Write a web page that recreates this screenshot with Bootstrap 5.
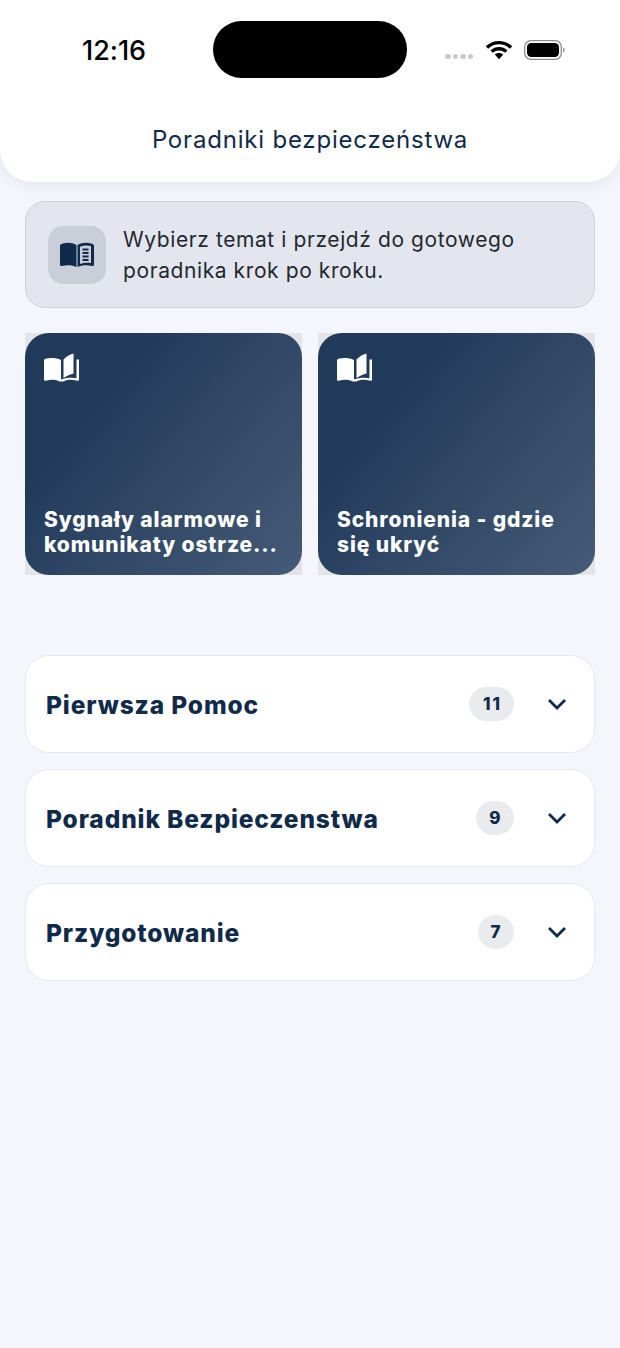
<!DOCTYPE html>
<html lang="pl">
<head>
<meta charset="utf-8">
<title>Poradniki bezpieczeństwa</title>
<link href="https://cdn.jsdelivr.net/npm/bootstrap@5.3.0/dist/css/bootstrap.min.css" rel="stylesheet">
<style>
html,body{height:100%}
body{background:#f4f6fb;font-family:Inter,"Liberation Sans",sans-serif;color:#0f2a4a;overflow:hidden}
.app-top{height:182px;background:#fff;border-radius:0 0 32px 32px;box-shadow:0 4px 14px rgba(15,42,74,.07);padding:21px 0 0}
.status-row{height:57px;padding:0 54px 0 82px}
.clock{width:131px;font-size:27px;font-weight:500;line-height:1;color:#000;letter-spacing:-.05px;padding-top:1px}
.island{width:194px;height:57px;background:#000;border-radius:29px}
.sig-wrap{margin-left:38px;gap:2px;margin-top:14px}
.sig-dot{width:5.500px;height:5.500px;border-radius:50%;background:#c9c9c9;display:block}
.status-right{margin-left:auto;gap:12px}
.app-title{font-size:24px;font-weight:400;letter-spacing:.8px;line-height:30px;margin:47px 0 0;color:#0f2a4a}
.app-main{padding:19px 25px 0}
.intro{background:#e3e6ee;border:1.5px solid #cdd1da;border-radius:20px;height:107px;padding:0 22px;gap:16px}
.intro-ico{width:58px;height:58px;border-radius:15px;background:#c9ced9}
.intro-text{font-size:21px;line-height:31px;letter-spacing:.59px;color:#23282f;margin:1px 0 0 1px}
.tiles{gap:16px;margin-top:25px}
.tile-wrap{flex:1 1 0;background:#e3e4e8;height:242px}
.tile{height:100%;border-radius:24px;border:0;background:linear-gradient(130deg,#223a5a 25%,#455b77 100%);padding:20px 19px 18px;color:#fff}
.tile-text{font-size:21px;font-weight:800;line-height:25px;letter-spacing:.87px;margin:0;color:#fff}
.accs{margin-top:80px;gap:16px}
.acc-row{height:98px;border:1.5px solid #e6e8ed;border-radius:24px;background:#fff;padding:0 27px 0 20px}
.acc-name{font-size:24.500px;font-weight:800;letter-spacing:.88px;margin:4px 0 0;color:#0f2a4a}
.count{height:34px;padding:1px 13px 0;border-radius:17px;background:#e9ebef;font-size:17px;font-weight:800;letter-spacing:.4px;color:#0f2a4a;margin-right:33px}
.count-wide{letter-spacing:2px;padding-left:14px;padding-right:12px}
</style>
</head>
<body>
<header class="app-top text-center">
  <div class="status-row d-flex align-items-center">
    <div class="clock text-start">12:16</div>
    <div class="island"></div>
    <div class="d-flex sig-wrap"><span class="sig-dot"></span><span class="sig-dot"></span><span class="sig-dot"></span><span class="sig-dot"></span></div>
    <div class="status-right d-flex align-items-center">
      <svg width="26" height="20" viewBox="0 0 26 20"><path d="M1 7.500C8 1 18 1 25 7.500" fill="none" stroke="#000" stroke-width="3.400"/><path d="M5.600 11.600C9.900 7.700 16.100 7.700 20.400 11.600" fill="none" stroke="#000" stroke-width="3.400"/><path d="M8.800 14.600C11.300 12.600 14.700 12.600 17.200 14.600L13 19.200Z" fill="#000"/></svg>
      <svg width="42" height="20" viewBox="0 0 42 20"><rect x=".7" y=".7" width="36.600" height="18.600" rx="6" fill="#fff" stroke="#8e8e8e" stroke-width="1.300"/><rect x="3" y="3" width="32" height="14" rx="4.200" fill="#000"/><path d="M39 7.500c1.300.4 1.800 1.400 1.800 2.500s-.5 2.100-1.800 2.500z" fill="#9a9a9a"/></svg>
    </div>
  </div>
  <h1 class="app-title">Poradniki bezpieczeństwa</h1>
</header>
<main class="app-main">
  <section class="intro d-flex align-items-center">
    <div class="intro-ico d-flex align-items-center justify-content-center flex-shrink-0">
      <svg width="34" height="26" viewBox="0 0 34 26"><path d="M2 1.800C7 .2 12 .5 16.500 3V25C12 23 7 22.800 2 24Q0 24.400 0 22.500V3.500Q0 2.300 2 1.800Z" fill="#0f2a4a"/><path d="M32 1.800C27 .2 22 .5 17.500 3V25C22 23 27 22.800 32 24Q34 24.400 34 22.500V3.500Q34 2.300 32 1.800Z" fill="#0f2a4a"/><path d="M20 4.800C23.500 3.300 27 3.200 31 4V21C27 20.400 23.500 20.600 20 22Z" fill="#c9ced9"/><path d="M22.500 7.500H28.500M22.500 11H28.500M22.500 14.500H28.500M22.500 18H28.500" stroke="#0f2a4a" stroke-width="2"/></svg>
    </div>
    <p class="intro-text">Wybierz temat i przejdź do gotowego<br>poradnika krok po kroku.</p>
  </section>
  <section class="tiles d-flex">
    <div class="tile-wrap">
      <article class="tile card justify-content-between">
        <svg width="35" height="29" viewBox="0 0 35 29"><path d="M17 7C12.500 4.800 6 4.500 1.500 5.800 .5 6.100 0 6.700 0 7.500V26.500C0 27.500 .8 28 1.800 27.700 7 26.300 12.500 26.600 15.500 28.500H19.500C22.500 26.600 28 26.300 33.200 27.700 34.200 28 35 27.500 35 26.500V6.500H32.500V25.300C28 24.400 23 24.700 18.500 26.300V25.800C21.500 23.500 25 21.500 29.500 20.500V.4C25.500 1.500 21.500 3.800 19.500 6.500V25.300C19 25.500 18.200 25.900 17.500 26.300H17Z" fill="#fff"/></svg>
        <p class="tile-text">Sygnały alarmowe i<br>komunikaty ostrze...</p>
      </article>
    </div>
    <div class="tile-wrap">
      <article class="tile card justify-content-between">
        <svg width="35" height="29" viewBox="0 0 35 29"><path d="M17 7C12.500 4.800 6 4.500 1.500 5.800 .5 6.100 0 6.700 0 7.500V26.500C0 27.500 .8 28 1.800 27.700 7 26.300 12.500 26.600 15.500 28.500H19.500C22.500 26.600 28 26.300 33.200 27.700 34.200 28 35 27.500 35 26.500V6.500H32.500V25.300C28 24.400 23 24.700 18.500 26.300V25.800C21.500 23.500 25 21.500 29.500 20.500V.4C25.500 1.500 21.500 3.800 19.500 6.500V25.300C19 25.500 18.200 25.900 17.500 26.300H17Z" fill="#fff"/></svg>
        <p class="tile-text">Schronienia - gdzie<br>się ukryć</p>
      </article>
    </div>
  </section>
  <section class="accs d-flex flex-column">
    <div class="acc-row d-flex align-items-center">
      <h2 class="acc-name me-auto">Pierwsza Pomoc</h2>
      <span class="count count-wide d-flex align-items-center justify-content-center">11</span>
      <svg width="20" height="12" viewBox="0 0 20 12"><path d="M2 2L10 10 18 2" fill="none" stroke="#0f2a4a" stroke-width="2.800"/></svg>
    </div>
    <div class="acc-row d-flex align-items-center">
      <h2 class="acc-name me-auto">Poradnik Bezpieczenstwa</h2>
      <span class="count d-flex align-items-center justify-content-center">9</span>
      <svg width="20" height="12" viewBox="0 0 20 12"><path d="M2 2L10 10 18 2" fill="none" stroke="#0f2a4a" stroke-width="2.800"/></svg>
    </div>
    <div class="acc-row d-flex align-items-center">
      <h2 class="acc-name me-auto">Przygotowanie</h2>
      <span class="count d-flex align-items-center justify-content-center">7</span>
      <svg width="20" height="12" viewBox="0 0 20 12"><path d="M2 2L10 10 18 2" fill="none" stroke="#0f2a4a" stroke-width="2.800"/></svg>
    </div>
  </section>
</main>
</body>
</html>
